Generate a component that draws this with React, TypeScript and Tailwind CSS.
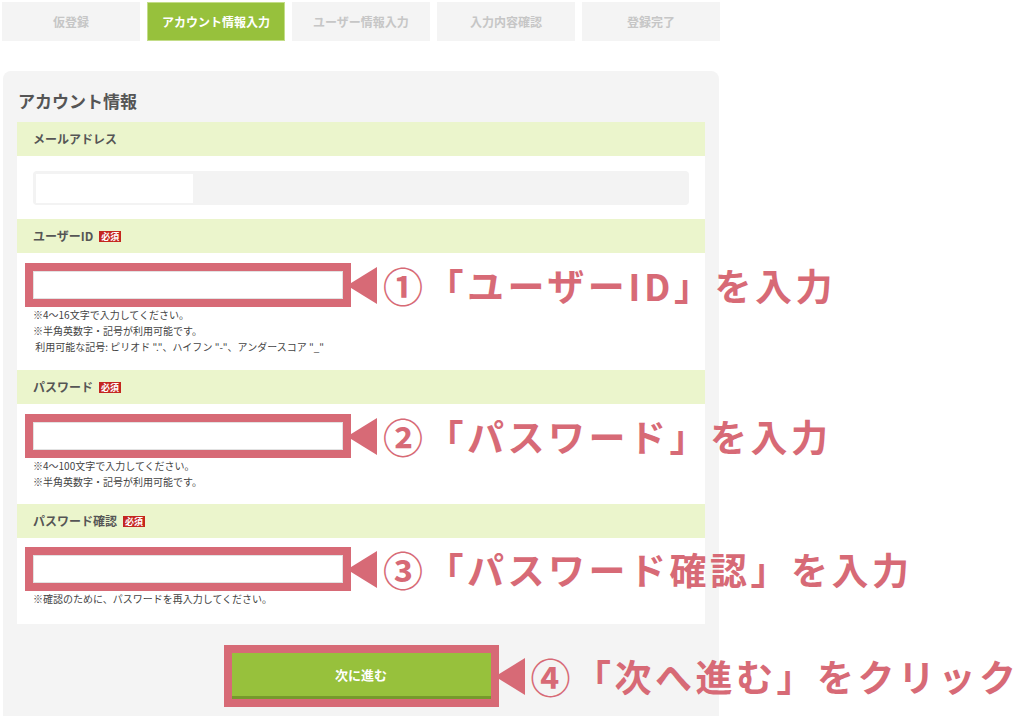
const RED = "text-[#d76a76]";

const steps = [
  { label: "仮登録", active: false },
  { label: "アカウント情報入力", active: true },
  { label: "ユーザー情報入力", active: false },
  { label: "入力内容確認", active: false },
  { label: "登録完了", active: false },
];

// Pink call-out that sits to the right of a highlighted control.
function Note({ num, text }: { num: string; text: string }) {
  return (
    <div
      className={`absolute left-full top-1/2 -translate-y-1/2 ml-[4px] flex items-center whitespace-nowrap font-bold text-[37px] leading-none tracking-[3.5px] ${RED}`}
      style={{ fontFamily: '"Noto Sans CJK JP", sans-serif' }}
    >
      <svg width="30" height="37" viewBox="0 0 30 37" className="shrink-0">
        <polygon points="30,0 30,37 0,18.5" fill="#d76a76" />
      </svg>
      <span className="ml-[6px] text-[40px]">{num}</span>
      <span>{text}</span>
    </div>
  );
}

function Badge() {
  return (
    <span className="ml-[6px] inline-block bg-[#c4261f] px-[2px] text-[9px] font-bold leading-[11px] text-white">
      必須
    </span>
  );
}

function LabelBar({ label, required }: { label: string; required?: boolean }) {
  return (
    <div className="flex h-[34px] items-center bg-[#ebf5cc] pl-4 text-[12px] font-bold text-[#555]">
      {label}
      {required && <Badge />}
    </div>
  );
}

function MarkedInput({ num, text }: { num: string; text: string }) {
  return (
    <div className="relative w-[326px] border-[8px] border-[#d76a76]">
      <div className="h-[28px] border border-[#e2e2e2] bg-white" />
      <Note num={num} text={text} />
    </div>
  );
}

function Help({ lines }: { lines: string[] }) {
  return (
    <div className="pl-4 text-[10px] leading-4 text-[#444]">
      {lines.map((l, i) => (
        <p key={i} className="whitespace-pre">
          {l}
        </p>
      ))}
    </div>
  );
}

export default function App() {
  return (
    <div
      className="h-[721px] w-[1024px] overflow-hidden bg-white"
      style={{ fontFamily: '"Noto Sans CJK JP", "Noto Sans", sans-serif' }}
    >
      {/* step tabs */}
      <div className="flex gap-[7px] pl-[2px] pt-[2px]">
        {steps.map((s) => (
          <div
            key={s.label}
            className={
              s.active
                ? "flex h-[39px] w-[138px] items-center justify-center border border-[#c3dd88] bg-[#97c13c] text-[12px] font-bold text-white"
                : "flex h-[39px] w-[138px] items-center justify-center bg-[#f4f4f4] text-[12px] font-bold text-[#c6c6c6]"
            }
          >
            {s.label}
          </div>
        ))}
      </div>

      {/* form panel */}
      <div className="ml-[3px] mt-[30px] h-[645px] w-[716px] rounded-t-lg bg-[#f4f4f4] px-[14px] pt-[18px]">
        <h2 className="mb-[9px] pl-[1px] text-[17px] font-bold leading-6 text-[#555]">アカウント情報</h2>

        <div className="bg-white">
          <LabelBar label="メールアドレス" />
          <div className="px-4 pb-[14px] pt-[15px]">
            <div className="flex h-[34px] items-center rounded-sm bg-[#f3f3f3] pl-[3px]">
              <div className="h-[29px] w-[157px] bg-white" />
            </div>
          </div>

          <LabelBar label="ユーザーID" required />
          <div className="pl-2 pt-[10px]">
            <MarkedInput num="①" text="「ユーザーID」を入力" />
          </div>
          <div className="pb-[15px]">
            <Help
              lines={[
                "※4～16文字で入力してください。",
                "※半角英数字・記号が利用可能です。",
                " 利用可能な記号: ピリオド \".\"、ハイフン \"-\"、アンダースコア \"_\"",
              ]}
            />
          </div>

          <LabelBar label="パスワード" required />
          <div className="pl-2 pt-[10px]">
            <MarkedInput num="②" text="「パスワード」を入力" />
          </div>
          <div className="pb-[14px]">
            <Help lines={["※4～100文字で入力してください。", "※半角英数字・記号が利用可能です。"]} />
          </div>

          <LabelBar label="パスワード確認" required />
          <div className="pl-2 pt-[9px]">
            <MarkedInput num="③" text="「パスワード確認」を入力" />
          </div>
          <div className="pb-[17px]">
            <Help lines={["※確認のために、パスワードを再入力してください。"]} />
          </div>
        </div>

        <div className="mt-[21px] flex justify-center">
          <div className="relative border-[8px] border-[#d76a76]">
            <button className="flex h-[46px] w-[259px] items-center justify-center border-b-[3px] border-[#76992c] bg-[#97c13c] text-[13px] font-bold text-white">
              次に進む
            </button>
            <Note num="④" text="「次へ進む」をクリック" />
          </div>
        </div>
      </div>
    </div>
  );
}
